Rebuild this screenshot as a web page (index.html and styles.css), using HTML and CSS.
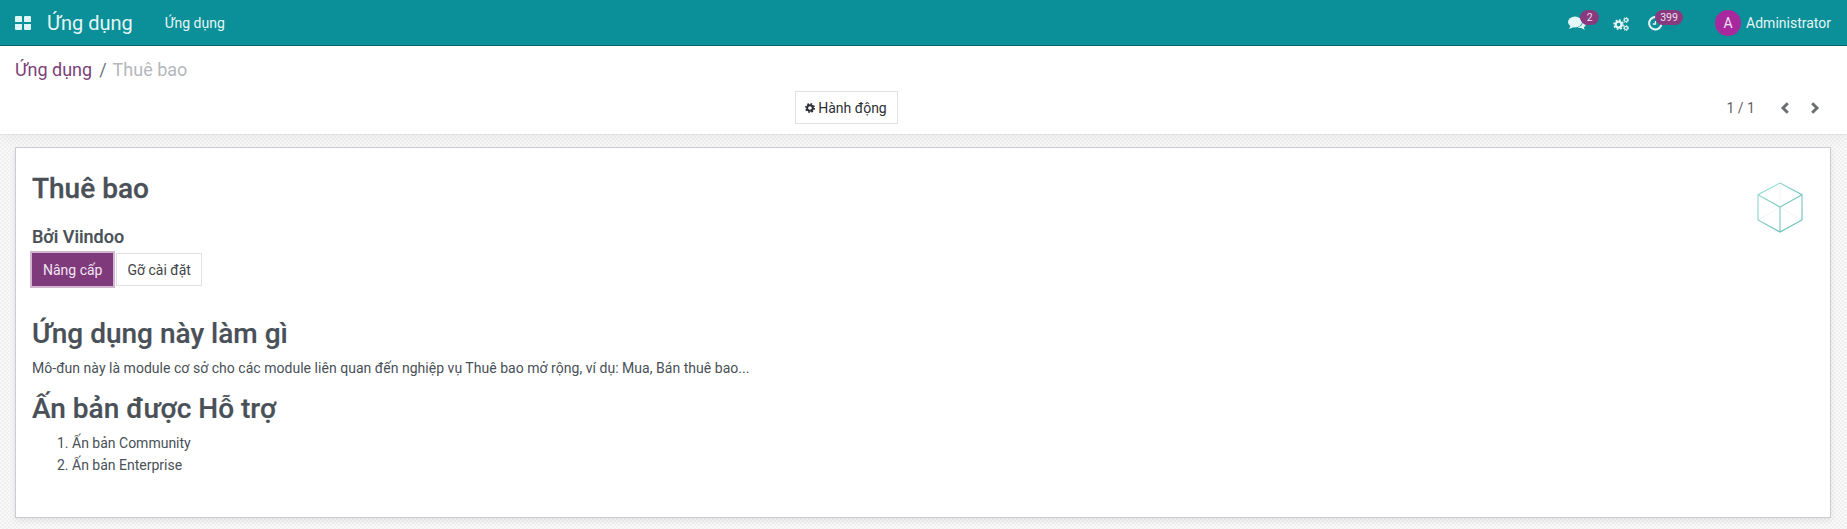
FILE: index.html
```html
<!DOCTYPE html>
<html lang="vi">
<head>
<meta charset="utf-8">
<title>Thuê bao</title>
<link rel="stylesheet" href="styles.css">
</head>
<body>
<header class="navbar">
  <svg class="apps" viewBox="0 0 16 14" width="16" height="14"><path d="M1 0h5a1 1 0 0 1 1 1v5H0V1a1 1 0 0 1 1-1zM10 0h5a1 1 0 0 1 1 1v5H9V1a1 1 0 0 1 1-1zM0 8h7v5a1 1 0 0 1-1 1H1a1 1 0 0 1-1-1zM9 8h7v5a1 1 0 0 1-1 1h-5a1 1 0 0 1-1-1z" fill="#dff5f4"/></svg>
  <span class="brand">Ứng dụng</span>
  <span class="menu">Ứng dụng</span>
  <div class="systray">
    <span class="tray chat">
      <svg viewBox="0 0 18 15" width="18" height="15"><ellipse cx="7" cy="6" rx="7" ry="5.4" fill="#e4f6f5"/><path d="M3 9 1 13l5-2z" fill="#e4f6f5"/><path d="M14.6 4.5c2 .8 3.2 2.2 3.2 3.8 0 1.3-.8 2.4-2 3.1l1 2.6-3.5-2c-1.5.1-3-.2-4-.8 3.2-.3 6-2.8 5.3-6.7z" fill="#e4f6f5"/></svg>
      <span class="badge badge-chat">2</span>
    </span>
    <span class="tray gears">
      <svg viewBox="0 0 16 14" width="16" height="14"><g fill="none" stroke="#e4f6f5"><circle cx="5.6" cy="7.6" r="3" stroke-width="2.4"/><circle cx="5.6" cy="7.6" r="4.6" stroke-width="1.6" stroke-dasharray="1.8 1.8"/><circle cx="13" cy="3" r="1.6" stroke-width="1.1"/><circle cx="13" cy="3" r="2.6" stroke-width="1" stroke-dasharray="1.2 1.2"/><circle cx="13" cy="11" r="1.6" stroke-width="1.1"/><circle cx="13" cy="11" r="2.6" stroke-width="1" stroke-dasharray="1.2 1.2"/></g></svg>
    </span>
    <span class="tray clock">
      <svg viewBox="0 0 15 15" width="15" height="15"><path d="M10 1.6A6.2 6.2 0 1 0 13.5 8" fill="none" stroke="#e4f6f5" stroke-width="2"/><path d="M7.5 5v3H4.8" fill="none" stroke="#e4f6f5" stroke-width="1.3"/></svg>
      <span class="badge badge-clock">399</span>
    </span>
    <span class="user"><span class="avatar">A</span><span class="username">Administrator</span></span>
  </div>
</header>
<section class="control">
  <nav class="crumbs"><span class="crumb-link">Ứng dụng</span><span class="crumb-sep">/</span><span class="crumb-now">Thuê bao</span></nav>
  <div class="actions">
    <div class="action-center">
      <button class="btn-action"><svg viewBox="0 0 12 12" width="10" height="10"><circle cx="6" cy="6" r="3.4" fill="none" stroke="#2b2f33" stroke-width="2.4"/><circle cx="6" cy="6" r="5" fill="none" stroke="#2b2f33" stroke-width="2" stroke-dasharray="2 1.93"/></svg>Hành động</button>
    </div>
    <div class="pager">
      <span class="pager-text">1 / 1</span>
      <svg class="chev" viewBox="0 0 10 12" width="10" height="12"><path d="M7.8 1.2 3 6l4.8 4.8" fill="none" stroke="#6c6f72" stroke-width="3"/></svg>
      <svg class="chev chev-next" viewBox="0 0 10 12" width="10" height="12"><path d="M2.2 1.2 7 6l-4.8 4.8" fill="none" stroke="#6c6f72" stroke-width="3"/></svg>
    </div>
  </div>
</section>
<main class="content">
  <article class="card">
    <svg class="cube" viewBox="0 0 48 51" width="48" height="51">
      <defs><linearGradient id="cubeStroke" x1="0" y1="0" x2="1" y2="1"><stop offset="0" stop-color="#9bdcd6"/><stop offset="1" stop-color="#62b8b3"/></linearGradient></defs>
      <g fill="none" stroke="#eaf2f1" stroke-width=".7"><path d="M24 1v25M2 38l22-13 22 13"/></g>
      <g fill="none" stroke="url(#cubeStroke)" stroke-width="1.1"><path d="M24 1 46 12.7V38L24 50 2 38V12.7zM2 12.7 24 25l22-12.3M24 25v25"/></g>
    </svg>
    <h1 class="title">Thuê bao</h1>
    <h3 class="author">Bởi Viindoo</h3>
    <div class="buttons">
      <button class="btn btn-primary">Nâng cấp</button>
      <button class="btn btn-light">Gỡ cài đặt</button>
    </div>
    <h2 class="heading heading-first">Ứng dụng này làm gì</h2>
    <p class="desc">Mô-đun này là module cơ sở cho các module liên quan đến nghiệp vụ Thuê bao mở rộng, ví dụ: Mua, Bán thuê bao...</p>
    <h2 class="heading">Ấn bản được Hỗ trợ</h2>
    <ol class="list">
      <li>Ấn bản Community</li>
      <li>Ấn bản Enterprise</li>
    </ol>
  </article>
</main>
</body>
</html>
```
FILE: styles.css
```css
* { box-sizing: border-box; }
html, body { margin: 0; height: 100%; }
body {
  font-family: Roboto, "Noto Sans", sans-serif;
  font-size: 14px;
  color: #495057;
  overflow: hidden;
  background-color: #f9f9f9;
  background-image: linear-gradient(45deg, #f0f0f0 25%, transparent 25%, transparent 75%, #f0f0f0 75%), linear-gradient(45deg, #f0f0f0 25%, transparent 25%, transparent 75%, #f0f0f0 75%);
  background-size: 4px 4px;
  background-position: 0 0, 2px 2px;
}
.navbar {
  height: 46px;
  background: #0b8f98;
  border-bottom: 1px solid #06636a;
  display: flex;
  align-items: center;
  padding-left: 15px;
  color: #e4f6f5;
}
.apps { flex: none; }
.brand { font-size: 20px; margin-left: 16px; }
.menu { font-size: 14px; margin-left: 32px; }
.systray { margin-left: auto; display: flex; align-items: center; padding-right: 16px; }
.tray { position: relative; display: flex; align-items: center; margin-top: 2px; }
.chat { margin-right: 27px; }
.gears { margin-right: 19px; }
.clock { margin-right: 52px; }
.badge {
  position: absolute;
  top: -6px;
  background: #873a7e;
  color: #f1dcee;
  font-size: 10.5px;
  line-height: 15px;
  height: 15px;
  border-radius: 8px;
  text-align: center;
}
.badge-chat { left: 12px; width: 19px; }
.badge-clock { left: 7px; width: 28px; }
.user { display: flex; align-items: center; }
.avatar {
  width: 26px; height: 26px; border-radius: 50%;
  background: #a7299d; color: #f2e1f0;
  display: flex; align-items: center; justify-content: center;
  font-size: 14px; margin-right: 5px;
}
.username { font-size: 14px; }
.control {
  position: relative;
  height: 89px;
  background: #fff;
  border-bottom: 1px solid #dee2e6;
  box-shadow: 0 6px 10px rgba(0,0,0,.035);
  padding: 12px 27px 0 15px;
}
.crumbs { font-size: 18px; line-height: 24px; display: flex; }
.crumb-link { color: #7c3f78; }
.crumb-sep { color: #6c757d; margin: 0 6px 0 7px; }
.crumb-now { color: #b4b7bb; }
.actions { display: flex; align-items: center; margin-top: 9px; position: relative; height: 33px; }
.action-center { flex: 1; display: flex; justify-content: center; padding-right: 142px; }
.btn-action {
  font: 14px Roboto, sans-serif;
  color: #2b2f33;
  background: #fff;
  border: 1px solid #dee2e6;
  height: 33px;
  padding: 0 10px 0 9px;
  display: flex; align-items: center; gap: 3px;
}
.pager { position: absolute; right: 0; top: 0; height: 33px; display: flex; align-items: center; color: #5f6265; }
.pager-text { font-size: 14px; margin-right: 25px; }
.chev-next { margin-left: 20px; }
.content { padding: 12px 16px 0 15px; }
.card {
  position: relative;
  height: 371px;
  background: #fff;
  border: 1px solid #c9ccd2;
  box-shadow: 0 3px 6px rgba(0,0,0,.08);
  padding: 24px 16px;
}
.cube { position: absolute; top: 34px; right: 26px; }
.title { font-size: 28px; font-weight: 500; line-height: 34px; margin: 0; -webkit-text-stroke: .3px #495057; }
.author { font-size: 18px; font-weight: 500; line-height: 22px; margin: 20px 0 0; -webkit-text-stroke: .2px #495057; }
.buttons { display: flex; gap: 3px; margin-top: 5px; }
.btn { font: 14px Roboto, sans-serif; height: 33px; padding: 0 10px; border: 1px solid #dee2e6; }
.btn-primary { background: #7f3a7c; color: #f3e6f2; border-color: #7f3a7c; box-shadow: 0 0 0 2px #d2b6d0; }
.btn-light { background: #fff; color: #3f4347; }
.heading { font-size: 28px; font-weight: 500; line-height: 34px; margin: 0; -webkit-text-stroke: .2px #495057; }
.heading-first { margin-top: 31px; }
.desc { margin: 7px 0 13px; line-height: 21px; letter-spacing: .03px; }
.list { margin: 6px 0 0; padding-left: 40px; line-height: 22px; }
```
